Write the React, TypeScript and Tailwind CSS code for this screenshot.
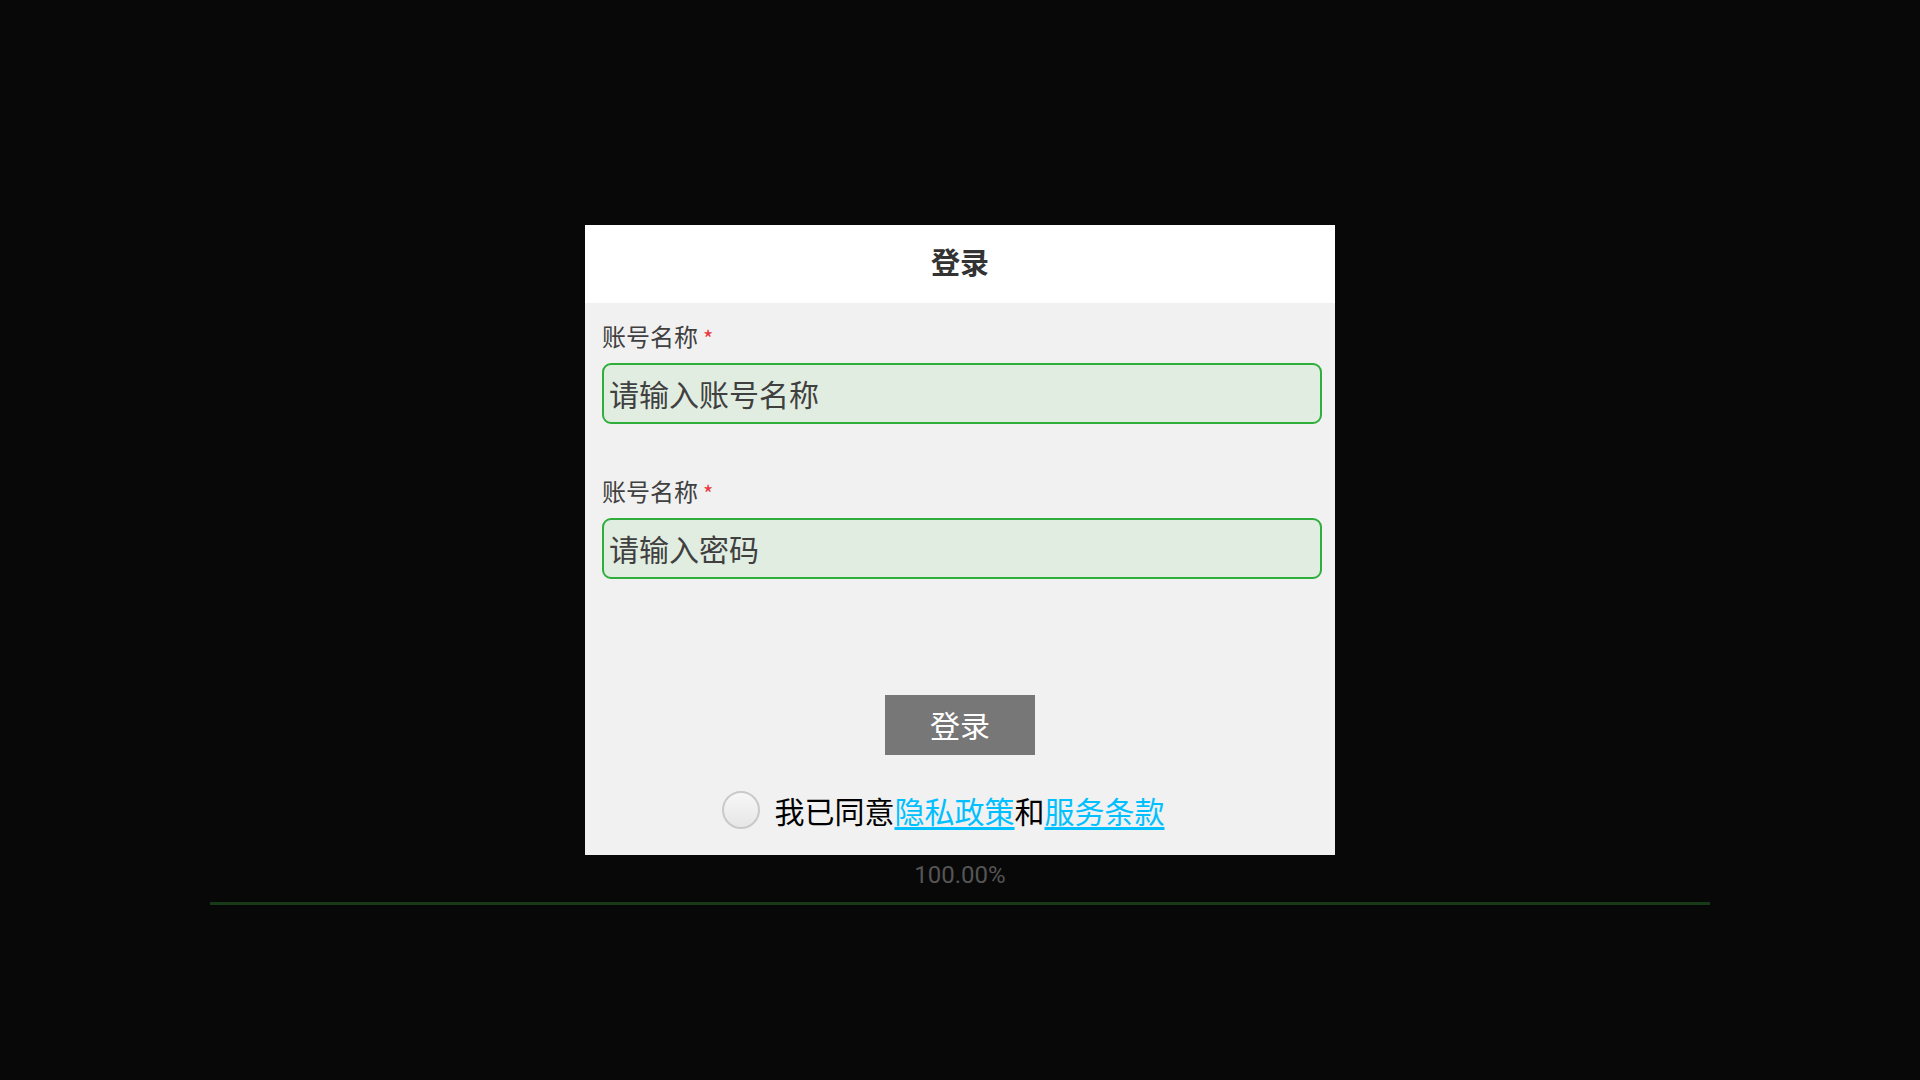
import { useState } from 'react'

const cjk = "font-['Noto_Sans_CJK_SC','Noto_Sans',sans-serif]"

function Field({ label, placeholder, type = 'text' }: { label: string; placeholder: string; type?: string }) {
  return (
    <div className="flex flex-col">
      <div className="flex h-[35px] items-center pb-[4px] text-[24px] leading-none text-[#404040]">
        <span>{label}</span>
        <span className="ml-[5px] mt-[2px] text-[22px] text-[#e8373e]">*</span>
      </div>
      <input
        type={type}
        placeholder={placeholder}
        className="mt-[8px] h-[61px] w-full rounded-[9px] border-2 border-[#2fae3c] bg-[#e1ede1] px-[5px] pb-[2px] text-[30px] text-[#333] outline-none placeholder:text-[#404040]"
      />
    </div>
  )
}

export default function App() {
  const [agreed, setAgreed] = useState(false)

  return (
    <div className={`flex min-h-screen flex-col items-center bg-[#080808] pt-[225px] ${cjk}`}>
      <div className="flex h-[630px] w-[750px] flex-col bg-[#f1f1f1]">
        <div className="flex h-[78px] items-center justify-center bg-white pb-[4px]">
          <h1 className="text-[29px] font-bold text-[#333]">登录</h1>
        </div>

        <div className="flex flex-1 flex-col pl-[17px] pr-[13px] pt-[17px]">
          <Field label="账号名称" placeholder="请输入账号名称" />
          <div className="h-[51px]" />
          <Field label="账号名称" placeholder="请输入密码" type="password" />

          <div className="mt-[116px] flex justify-center pr-[4px]">
            <button className="h-[60px] w-[150px] bg-[#777777] pb-[2px] text-[30px] text-white">登录</button>
          </div>

          <div className="mt-[36px] flex items-center justify-center pr-[38px]">
            <button
              onClick={() => setAgreed(!agreed)}
              className="h-[38px] w-[38px] rounded-full border-2 border-[#c9c9c9] bg-gradient-to-b from-[#f7f7f7] to-[#e6e6e6]"
            >
              {agreed && <span className="m-auto block h-[18px] w-[18px] rounded-full bg-[#2fae3c]" />}
            </button>
            <p className="ml-[15px] text-[30px] leading-none text-black">
              我已同意
              <a className="text-[#00c0ff] underline underline-offset-[4px]">隐私政策</a>
              和
              <a className="text-[#00c0ff] underline underline-offset-[4px]">服务条款</a>
            </p>
          </div>
        </div>
      </div>

      <div className="mt-[6px] font-['Roboto',sans-serif] text-[24px] leading-[28px] text-[#555]">100.00%</div>
      <div className="mt-[13px] h-[3px] w-[1500px] bg-[#173a17]" />
    </div>
  )
}
